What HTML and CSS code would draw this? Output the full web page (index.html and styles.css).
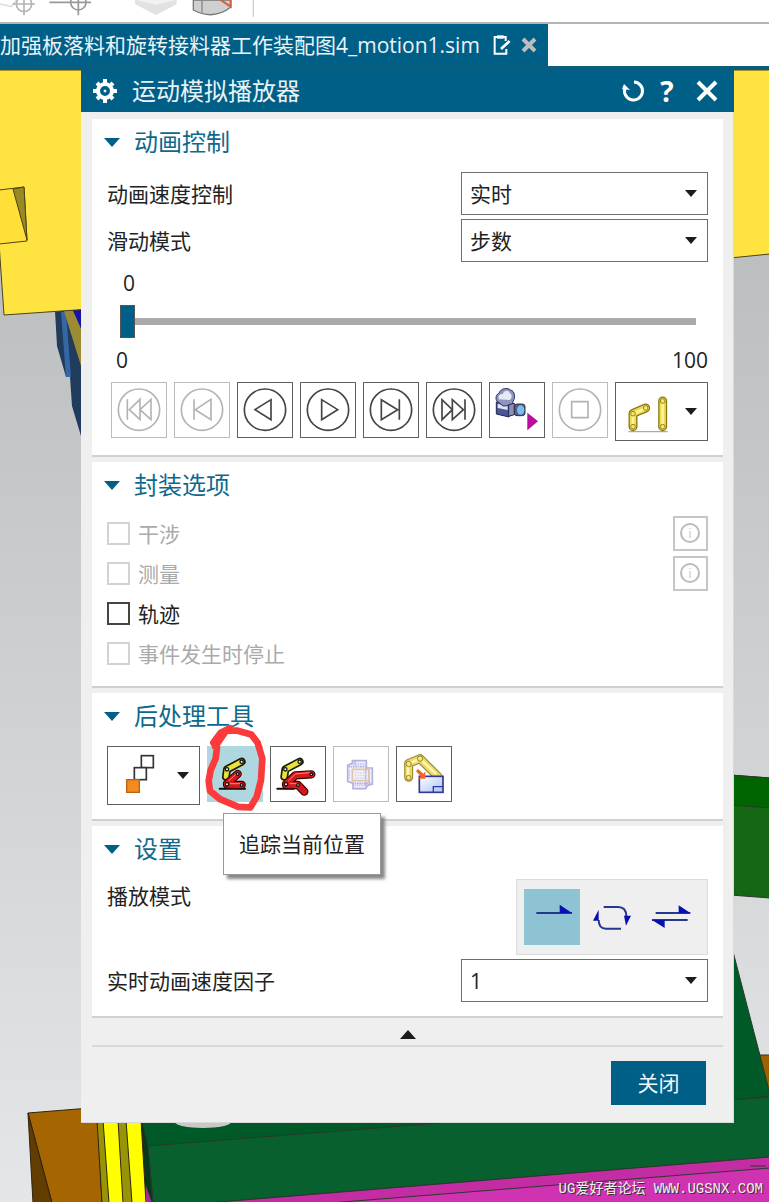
FILE: index.html
```html
<!DOCTYPE html>
<html lang="zh-CN">
<head>
    <meta charset="UTF-8">
    <meta name="viewport" content="width=device-width, initial-scale=1.0">
    <title>运动模拟播放器</title>
    <link rel="stylesheet" href="styles.css">
</head>
<body>
    <div class="toolbar">
        <svg width="260" height="22" viewBox="0 0 780 66" fill="none">
            <g stroke="#b4b4b4" stroke-width="5">
                <path d="M0 12L34 20L50 0" stroke="#ddd" />
                <circle cx="72" cy="12" r="23" />
                <path d="M38 12H105M72 0V46" />
            </g>
            <g stroke="#999" stroke-width="5">
                <circle cx="235" cy="7" r="23" />
                <path d="M148 7H273M235 0V46" />
            </g>
            <path d="M405 0H530V12L468 46L405 12Z" fill="#e2e2e2" />
            <path d="M405 0H530L468 14Z" fill="#f1f1f1" />
            <path d="M580 0H692V22Q640 62 580 30Z" fill="#cfcfcf" stroke="#777" stroke-width="4" />
            <path d="M606 0V38" stroke="#888" stroke-width="4" />
            <path d="M662 0L692 20V0" stroke="#d2603a" stroke-width="6" />
            <path d="M760 0V50" stroke="#ccc" stroke-width="4" />
        </svg>
    </div>
    <div class="tab-bar">
        <div class="tab">
            <span>加强板落料和旋转接料器工作装配图4_motion1.sim</span>
            <svg width="18" height="20" viewBox="0 0 54 60" fill="none" stroke="#fff" stroke-width="6">
                <path d="M40 42V56H5V6H38V18" />
                <path d="M12 6H32" stroke-width="10" />
                <path d="M24 42L50 18" stroke-width="8" />
            </svg>
            <button class="tab-close" aria-label="关闭标签">
                <svg width="16" height="16" viewBox="0 0 16 16" stroke="#bdbdbd" stroke-width="4">
                    <path d="M2 2L14 14M14 2L2 14" />
                </svg>
            </button>
        </div>
    </div>

    <div class="viewport">
        <!-- 3D model -->
        <svg class="scene" viewBox="0 70 769 1132" preserveAspectRatio="xMidYMin slice">
            <defs>
                <linearGradient id="sky" x1="0" y1="0" x2="0" y2="1">
                    <stop offset="0" stop-color="#b6b7b9" />
                    <stop offset="0.3" stop-color="#c3c4c6" />
                    <stop offset="1" stop-color="#e4e6e8" />
                </linearGradient>
            </defs>
            <rect x="0" y="70" width="769" height="1132" fill="url(#sky)" />
            <path d="M55 311L81 308V436L72 406L70 377H66L57 346Z" fill="#203c5c" />
            <path d="M61 312H66L71 377H66Z" fill="#3567a4" />
            <path d="M64 311H73L90 345V395Z" fill="#9a8c34" />
            <path d="M73 310H90V350Z" fill="#1a12a8" />
            <g stroke="#4c4419" stroke-width="1">
                <path d="M-1 70H90V309L4 315L-1 243Z" fill="#ffe341" />
                <path d="M-1 190L24 187L27 241L-1 244Z" fill="#ffdf38" />
                <path d="M13 189L24 187L27 240Z" fill="#998824" />
                <path d="M730 70H770V254L730 258Z" fill="#ffe341" />
            </g>
            <g stroke="#2a3a2a" stroke-width="1">
                <path d="M730 775L770 778V898L730 895Z" fill="#146814" />
                <path d="M730 775L770 778V808L730 805Z" fill="#006400" />
                <path d="M759 1055H770V1095Z" fill="#a06200" />
                <path d="M730 940L770 1094V1160L207 1203H150L142 1120H730Z" fill="#005a28" />
                <path d="M148 1146L770 1097V1157L207 1203H153Z" fill="#08602f" />
                <path d="M142 1120L148 1146L153 1203H146L141 1120Z" fill="#04391c" />
                <path d="M207 1203L770 1157V1203Z" fill="#c42ca4" />
                <path d="M330 1203L770 1168V1203Z" fill="#d033b2" />
                <path d="M750 1166H766M745 1099L769 1096" />
            </g>
            <ellipse cx="203" cy="1122" rx="28" ry="6" fill="#c8c8c8" />
            <g stroke="#2f2410" stroke-width="1">
                <path d="M28 1113L90 1108L98 1120L102 1203H52Z" fill="#a56500" />
                <path d="M28 1113L52 1203H33Z" fill="#633d00" />
                <path d="M97 1120H141L146 1203H102Z" fill="#989408" />
                <path d="M103 1120H118L123 1203H109Z" fill="#ff0" />
                <path d="M126 1120H141L146 1203H132Z" fill="#ff0" />
            </g>
            <path d="M146 1186L152 1203H146Z" fill="#a32d92" />
        </svg>

        <div class="dialog">
            <div class="dialog-header">
                <svg width="24" height="24" viewBox="0 0 24 24" fill="none" stroke="#fff">
                    <circle cx="12" cy="12" r="7" stroke-width="4" />
                    <path d="M12 0V4M12 20V24M0 12H4M20 12H24M4 4L6 6M18 18L20 20M4 20L6 18M18 6L20 4" stroke-width="4" />
                    <circle cx="12" cy="12" r="1" fill="#fff" />
                </svg>
                <h1>运动模拟播放器</h1>
                <button class="header-button" aria-label="重置">
                    <svg width="24" height="24" viewBox="0 0 24 24" fill="none" stroke="#fff" stroke-width="3">
                        <path d="M13 3A9 9 0 1 1 4 9" />
                        <path d="M1 10L3 5L9 11Z" fill="#fff" stroke="none" />
                    </svg>
                </button>
                <button class="header-button">?</button>
                <button class="header-button header-close" aria-label="关闭窗口">
                    <svg width="22" height="22" viewBox="0 0 22 22" stroke="#fff" stroke-width="4">
                        <path d="M2 2L20 20M20 2L2 20" />
                    </svg>
                </button>
            </div>

            <div class="sections">
                <section class="section">
                    <h2>动画控制</h2>
                    <div class="section-body">
                        <div class="field">
                            <label for="speedControl">动画速度控制</label>
                            <div class="select-box">
                                <select id="speedControl"><option>实时</option></select>
                            </div>
                        </div>
                        <div class="field">
                            <label for="slideMode">滑动模式</label>
                            <div class="select-box">
                                <select id="slideMode"><option>步数</option></select>
                            </div>
                        </div>
                        <label class="slider-value" for="stepSlider">0</label>
                        <input type="range" class="slider" id="stepSlider" min="0" max="100" value="0">
                        <div class="slider-range">
                            <span>0</span>
                            <span>100</span>
                        </div>
                        <div class="button-row playback">
                            <button class="icon-button" aria-label="第一步" disabled>
                                <svg viewBox="3 3 162 162"><circle cx="84" cy="83" r="62" /><path d="M49 52V113M87 52V113L55 83ZM120 52V113L87 83Z" /></svg>
                            </button>
                            <button class="icon-button" aria-label="上一步" disabled>
                                <svg viewBox="3 3 162 162"><circle cx="84" cy="83" r="62" /><path d="M60 52V113M111 52V113L64 83Z" /></svg>
                            </button>
                            <button class="icon-button" aria-label="向后播放">
                                <svg viewBox="3 3 162 162"><circle cx="84" cy="83" r="62" /><path d="M102 53V113L54 83Z" /></svg>
                            </button>
                            <button class="icon-button" aria-label="播放">
                                <svg viewBox="3 3 162 162"><circle cx="84" cy="83" r="62" /><path d="M65 53V113L113 83Z" /></svg>
                            </button>
                            <button class="icon-button" aria-label="下一步">
                                <svg viewBox="3 3 162 162"><circle cx="84" cy="83" r="62" /><path d="M109 52V113M55 53V113L104 83Z" /></svg>
                            </button>
                            <button class="icon-button" aria-label="最后一步">
                                <svg viewBox="3 3 162 162"><circle cx="84" cy="83" r="62" /><path d="M117 52V113M48 53V113L79 83ZM79 53V113L112 83Z" /></svg>
                            </button>
                            <button class="icon-button" aria-label="导出电影">
                                <svg class="picture" viewBox="3 3 162 162">
                                    <path d="M22 60L60 66V105L22 96Z" fill="#4a5596" stroke="#20264e" stroke-width="3" />
                                    <path d="M26 66L56 70V84L26 78Z" fill="#dfe4f8" />
                                    <path d="M30 62C18 58 18 38 30 34C34 18 58 16 64 24C78 26 80 48 72 58L70 70L42 72Z" fill="#8d94bf" stroke="#2d3158" stroke-width="3" />
                                    <path d="M30 52C26 42 32 34 42 36C44 24 60 24 62 33C70 36 70 48 62 54Z" fill="#e6e8f6" />
                                    <path d="M59 68L76 64V98L59 103Z" fill="#8890bb" stroke="#20264e" stroke-width="3" />
                                    <rect x="76" y="66" width="32" height="35" rx="8" fill="#555f86" stroke="#333" stroke-width="3" />
                                    <ellipse cx="95" cy="84" rx="11" ry="14" fill="#79bdf2" />
                                    <path d="M115 92L147 118L115 145Z" fill="#bb0c9a" />
                                </svg>
                            </button>
                            <button class="icon-button" aria-label="停止" disabled>
                                <svg viewBox="3 3 162 162"><circle cx="84" cy="83" r="62" /><path d="M59 59H108V107H59Z" /></svg>
                            </button>
                            <button class="icon-button combo" aria-label="设计位置">
                                <svg class="picture" viewBox="3 3 168 171">
                                    <path d="M40 149H158" stroke="#aaa" stroke-width="4" />
                                    <g fill="none" stroke-linecap="round" stroke-linejoin="round">
                                        <path d="M54 134V94L92 78M143 57V134" stroke="#8a7a16" stroke-width="27" />
                                        <path d="M54 134V94L92 78M143 57V134" stroke="#f0dc50" stroke-width="19" />
                                        <path d="M54 130V96L90 80M143 65V128" stroke="#fdf6a8" stroke-width="7" />
                                    </g>
                                    <g fill="#f4e470" stroke="#9a871c" stroke-width="3">
                                        <circle cx="54" cy="134" r="7" /><circle cx="54" cy="95" r="7" /><circle cx="92" cy="78" r="7" />
                                        <circle cx="143" cy="57" r="7" /><circle cx="143" cy="134" r="7" />
                                    </g>
                                </svg>
                                <span class="caret"></span>
                            </button>
                        </div>
                    </div>
                </section>

                <section class="section">
                    <h2>封装选项</h2>
                    <div class="section-body options">
                        <div class="option">
                            <input type="checkbox" id="interference" disabled>
                            <label for="interference">干涉</label>
                            <button class="info-button" aria-label="干涉信息" disabled>
                                <svg width="21" height="21" viewBox="0 0 21 21" fill="none" stroke="#bbb"><circle cx="10" cy="10" r="9" stroke-width="2" /><path d="M10 5V6M10 8V15" /></svg>
                            </button>
                        </div>
                        <div class="option">
                            <input type="checkbox" id="measure" disabled>
                            <label for="measure">测量</label>
                            <button class="info-button" aria-label="测量信息" disabled>
                                <svg width="21" height="21" viewBox="0 0 21 21" fill="none" stroke="#bbb"><circle cx="10" cy="10" r="9" stroke-width="2" /><path d="M10 5V6M10 8V15" /></svg>
                            </button>
                        </div>
                        <div class="option">
                            <input type="checkbox" id="trace">
                            <label for="trace">轨迹</label>
                        </div>
                        <div class="option">
                            <input type="checkbox" id="stopOnEvent" disabled>
                            <label for="stopOnEvent">事件发生时停止</label>
                        </div>
                    </div>
                </section>

                <section class="section">
                    <h2>后处理工具</h2>
                    <div class="section-body">
                        <div class="button-row">
                            <button class="icon-button combo" aria-label="运动序列">
                                <svg class="picture" viewBox="3 3 168 171">
                                    <g fill="#fff" stroke="#333" stroke-width="5">
                                        <rect x="103" y="29" width="36" height="36" />
                                        <rect x="82" y="65" width="36" height="36" />
                                    </g>
                                    <rect x="59" y="101" width="38" height="38" fill="#f58a1f" stroke="#b86412" stroke-width="4" />
                                </svg>
                                <span class="caret"></span>
                            </button>
                            <div class="tool">
                                <button class="icon-button selected" aria-describedby="traceTip" aria-label="追踪">
                                    <svg class="picture" viewBox="3 3 162 162">
                                        <g fill="none" stroke-linecap="round" stroke-linejoin="round">
                                            <path d="M38 128H114" stroke="#111" stroke-width="6" />
                                            <path d="M57 92L60 70L104 47" stroke="#1a1a00" stroke-width="24" />
                                            <path d="M57 92L60 70L104 47" stroke="#e8e23c" stroke-width="14" />
                                            <path d="M60 113L92 84M60 116L104 117" stroke="#3a0000" stroke-width="25" />
                                            <path d="M60 113L92 84M60 116L104 117" stroke="#d4181c" stroke-width="18" />
                                            <path d="M66 104L88 84M70 113H98" stroke="#ff8c80" stroke-width="3" />
                                        </g>
                                        <g fill="#fff" stroke="#111" stroke-width="4">
                                            <circle cx="60" cy="70" r="5" /><circle cx="104" cy="47" r="5" />
                                            <circle cx="92" cy="84" r="4" /><circle cx="60" cy="115" r="5" /><circle cx="104" cy="117" r="4" />
                                        </g>
                                    </svg>
                                </button>
                                <svg class="marker" width="70" height="97" viewBox="330 90 210 290" fill="none" stroke="#fb3a3c" stroke-width="20" stroke-linecap="round" stroke-linejoin="round">
                                    <path d="M420 114L392 128L370 158L381 172L377 205L362 240L356 272L360 302L390 327L445 350L481 352L500 320L513 270L517 205L503 158L484 133L440 121L408 122L390 148L376 170" />
                                </svg>
                                <div class="tooltip" id="traceTip" role="tooltip">追踪当前位置</div>
                            </div>
                            <button class="icon-button" aria-label="追踪整个机构">
                                <svg class="picture" viewBox="3 3 162 162">
                                    <g fill="none" stroke-linecap="round" stroke-linejoin="round">
                                        <path d="M22 128H72" stroke="#111" stroke-width="6" />
                                        <path d="M43 92L46 70L89 47" stroke="#1a1a00" stroke-width="24" />
                                        <path d="M43 92L46 70L89 47" stroke="#e8e23c" stroke-width="14" />
                                        <path d="M48 114L76 88L124 85M48 117L84 117L103 137" stroke="#3a0000" stroke-width="25" />
                                        <path d="M48 114L76 88L124 85M48 117L84 117L103 137" stroke="#d4181c" stroke-width="18" />
                                        <path d="M56 104L76 84L118 80M60 113H82" stroke="#ff8c80" stroke-width="3" />
                                    </g>
                                    <g fill="#fff" stroke="#111" stroke-width="4">
                                        <circle cx="46" cy="70" r="5" /><circle cx="89" cy="47" r="5" />
                                        <circle cx="48" cy="115" r="5" /><circle cx="124" cy="85" r="4" /><circle cx="84" cy="117" r="4" />
                                    </g>
                                </svg>
                            </button>
                            <button class="icon-button" aria-label="干涉体" disabled>
                                <svg class="picture" viewBox="3 3 162 162" fill="none">
                                    <g stroke="#b3b1dc" stroke-width="5">
                                        <path d="M58 44H100V66H118V114L104 118L98 128H60V112L44 106V58L58 52Z" fill="#f1f0fa" />
                                        <path d="M46 62H98V124M66 46V60M58 112H112M108 70V110" stroke-dasharray="5 2" />
                                    </g>
                                    <path d="M60 54H98M48 72V100M64 118H96" stroke="#c9c7e8" stroke-width="6" stroke-dasharray="4 3" />
                                    <path d="M58 70H108V104H58Z" stroke="#e2c3ae" stroke-width="5" />
                                    <path d="M66 80H102M66 88H102M66 96H102" stroke="#d5d0e4" stroke-width="4" stroke-dasharray="4 4" />
                                </svg>
                            </button>
                            <button class="icon-button" aria-label="创建布局">
                                <svg class="picture" viewBox="3 3 162 162">
                                    <defs>
                                        <linearGradient id="sheet" x1="0" y1="0" x2="1" y2="1">
                                            <stop offset="0" stop-color="#fff" />
                                            <stop offset="1" stop-color="#a9c4f5" />
                                        </linearGradient>
                                    </defs>
                                    <g fill="none" stroke-linecap="round" stroke-linejoin="round">
                                        <path d="M38 94V52L72 38L126 92" stroke="#9a8b30" stroke-width="27" />
                                        <path d="M38 94V52L72 38L126 92" stroke="#ecd964" stroke-width="20" />
                                        <path d="M36 90V54L72 38L118 82" stroke="#fdf5b4" stroke-width="8" />
                                    </g>
                                    <g fill="#f4e68a" stroke="#9a871c" stroke-width="3">
                                        <circle cx="38" cy="54" r="8" /><circle cx="72" cy="38" r="8" /><circle cx="38" cy="95" r="7" />
                                    </g>
                                    <rect x="70" y="91" width="71" height="48" fill="url(#sheet)" stroke="#3038a0" stroke-width="5" />
                                    <path d="M112 139V122H141" fill="none" stroke="#3038a0" stroke-width="4" />
                                    <path d="M60 76L66 69L82 83L88 76V98H66L74 91Z" fill="#f0662c" />
                                </svg>
                            </button>
                        </div>
                    </div>
                </section>

                <section class="section">
                    <h2>设置</h2>
                    <div class="section-body">
                        <div class="field mode-field">
                            <span id="modeLabel">播放模式</span>
                            <div class="mode-group" role="group" aria-labelledby="modeLabel">
                                <button class="mode-button active" aria-label="播放一次">
                                    <svg viewBox="0 0 168 168"><path d="M37 72H144" /><path class="head" d="M107 47L144 72H107Z" /></svg>
                                </button>
                                <button class="mode-button" aria-label="循环播放">
                                    <svg viewBox="0 0 168 168"><path d="M59 54H102Q127 54 127 82M111 119H66Q44 119 44 93" /><path class="head" d="M120 80H141L126 110ZM27 95L44 62V95Z" /></svg>
                                </button>
                                <button class="mode-button" aria-label="往返播放">
                                    <svg viewBox="0 0 168 168"><path d="M35 72H139M24 93H131" /><path class="head" d="M104 49L139 72H104ZM24 93H62V117Z" /></svg>
                                </button>
                            </div>
                        </div>
                        <div class="field">
                            <label for="speedFactor">实时动画速度因子</label>
                            <div class="select-box">
                                <select id="speedFactor"><option>1</option></select>
                            </div>
                        </div>
                    </div>
                </section>

                <button class="collapse" aria-label="收起"><span class="caret up"></span></button>
            </div>

            <div class="dialog-footer">
                <button class="close-button">关闭</button>
            </div>
        </div>

        <div class="watermark">UG爱好者论坛 WWW.UGSNX.COM</div>
    </div>
</body>
</html>
```
FILE: styles.css
```css
* {
    box-sizing: border-box;
    margin: 0;
    padding: 0;
}
body {
    display: flex;
    flex-direction: column;
    min-height: 100vh;
    background-color: #fff;
    color: #222;
    font-family: "Open Sans", "Noto Sans CJK SC", sans-serif;
    font-size: 21px;
    line-height: 34px;
}
button, select {
    font: inherit;
    color: inherit;
}
button {
    border: none;
    background-color: transparent;
}
svg {
    display: block;
}

/* top bars */
.toolbar {
    height: 24px;
    border-bottom: 2px solid #b4b4b4;
    overflow: hidden;
}
.tab-bar {
    display: flex;
    border-bottom: 4px solid #0b5c7d;
}
.tab {
    display: flex;
    align-items: center;
    height: 42px;
    padding-right: 11px;
    background-color: #005f87;
    color: #e9f3f7;
    white-space: nowrap;
}
.tab > svg {
    margin: 0 10px 0 13px;
}

/* graphics window */
.viewport {
    position: relative;
    flex: 1;
    padding: 0 35px 78px 81px;
}
.scene {
    position: absolute;
    top: 0;
    left: 0;
    width: 100%;
    height: 100%;
}
.watermark {
    position: absolute;
    right: 6px;
    bottom: 3px;
    color: #eee;
    font-family: "Liberation Mono", "Noto Sans CJK SC", monospace;
    font-size: 14px;
    line-height: 20px;
    text-shadow: 1px 1px 0 #333;
}

/* dialog */
.dialog {
    position: relative;
    background-color: #efefef;
    box-shadow: inset -1px -1px 0 #d9d9d9;
}
.dialog-header {
    display: flex;
    align-items: center;
    height: 42px;
    padding: 0 4px 0 12px;
    background-color: #005f87;
    color: #fff;
}
.dialog-header h1 {
    flex: 1;
    margin-left: 15px;
    font-size: 24px;
    font-weight: 400;
    color: #e9f3f7;
}
.header-button {
    display: flex;
    justify-content: center;
    align-items: center;
    width: 34px;
    height: 42px;
    font-size: 28px;
    font-weight: 700;
}
.header-close {
    width: 46px;
}
.sections {
    display: flex;
    flex-direction: column;
    gap: 5px;
    padding: 7px 11px 0;
}
.section {
    background-color: #fff;
    border-bottom: 2px solid #d0d0d0;
}
.section h2 {
    display: flex;
    align-items: center;
    gap: 14px;
    height: 46px;
    padding-left: 12px;
    font-size: 24px;
    font-weight: 400;
    color: #0d6a8c;
}
.section h2::before {
    content: "";
    border: 8px solid transparent;
    border-top: 9px solid #005f87;
    border-bottom: none;
}
.section-body {
    padding: 7px 15px 14px;
}

/* fields */
.field {
    display: flex;
    justify-content: space-between;
    align-items: center;
}
.field + .field {
    margin-top: 4px;
}
.mode-field {
    align-items: flex-start;
}
.select-box {
    display: grid;
    align-items: center;
    width: 247px;
}
.select-box select {
    grid-area: 1 / 1;
    height: 43px;
    padding: 0 8px;
    border: 1px solid #6e6e6e;
    border-radius: 0;
    background-color: #fff;
    appearance: none;
}
.select-box::after {
    content: "";
    grid-area: 1 / 1;
    justify-self: end;
    margin-right: 11px;
    border: 6px solid transparent;
    border-top: 7px solid #1c1c1c;
    border-bottom: none;
    pointer-events: none;
}
.caret {
    border: 6px solid transparent;
    border-top: 7px solid #1c1c1c;
    border-bottom: none;
}
.caret.up {
    border: 8px solid transparent;
    border-top: none;
    border-bottom: 9px solid #1c1c1c;
}

/* slider */
.slider-value {
    display: block;
    padding-left: 16px;
    line-height: 42px;
}
.slider {
    display: block;
    width: calc(100% - 25px);
    height: 34px;
    margin: 0 12px 0 13px;
    background-color: transparent;
    appearance: none;
}
.slider::-webkit-slider-runnable-track {
    height: 7px;
    background-color: #aaa;
}
.slider::-webkit-slider-thumb {
    width: 15px;
    height: 33px;
    margin-top: -13px;
    border: 1px solid #555;
    background-color: #005f87;
    appearance: none;
}
.slider-range {
    display: flex;
    justify-content: space-between;
    padding-left: 9px;
    line-height: 44px;
}

/* icon buttons */
.button-row {
    display: flex;
    align-items: flex-start;
    gap: 7px;
}
.playback {
    justify-content: flex-end;
}
.icon-button {
    width: 56px;
    height: 56px;
    border: 1px solid #5f5f5f;
    background-color: #fff;
}
.icon-button svg {
    width: 54px;
    height: 54px;
    fill: none;
    stroke: #444;
    stroke-width: 5px;
}
.icon-button svg.picture {
    stroke: none;
    stroke-width: 1px;
}
.icon-button:disabled {
    border-color: #bbb;
}
.icon-button:disabled svg:not(.picture) {
    stroke: #b4b4b4;
}
.icon-button.selected {
    border-color: #afd7e0;
    background-color: #afd7e0;
}
.icon-button.combo {
    display: flex;
    justify-content: space-between;
    align-items: center;
    width: 93px;
    height: 59px;
    padding-right: 10px;
}
.icon-button.combo svg {
    width: 56px;
    height: 57px;
}

/* package options */
.options {
    display: flex;
    flex-direction: column;
    gap: 5px;
    padding: 8px 15px 15px;
}
.option {
    display: flex;
    align-items: center;
    gap: 8px;
    height: 35px;
}
.option input {
    width: 23px;
    height: 23px;
    border: 2px solid #444;
    background-color: #fff;
    appearance: none;
}
.option input:disabled {
    border-color: #d2d2d2;
}
.option input:disabled + label {
    color: #aaa;
}
.info-button {
    display: flex;
    justify-content: center;
    align-items: center;
    width: 35px;
    height: 35px;
    margin-left: auto;
    border: 2px solid #c6c6c6;
}

/* highlighted tool */
.tool {
    display: flex;
    position: relative;
}
.marker {
    position: absolute;
    left: -7px;
    top: -26px;
    z-index: 1;
    pointer-events: none;
}
.tooltip {
    position: absolute;
    left: 16px;
    top: 67px;
    z-index: 2;
    padding: 13px 15px;
    border: 1px solid #999;
    background-color: #fff;
    box-shadow: 4px 4px 3px #888;
    white-space: nowrap;
}

/* play mode */
.mode-group {
    display: flex;
    gap: 4px;
    padding: 9px 7px;
    border: 1px solid #dcdcdc;
    background-color: #efefef;
}
.mode-button {
    width: 56px;
    height: 56px;
}
.mode-button.active {
    background-color: #8dc3d2;
}
.mode-button svg {
    fill: none;
    stroke: #24398c;
    stroke-width: 6px;
}
.mode-button .head {
    fill: #0a0fb4;
    stroke: none;
}

/* footer */
.collapse {
    display: flex;
    justify-content: center;
    align-items: center;
    height: 24px;
    border-bottom: 2px solid #d9d9d9;
}
.dialog-footer {
    display: flex;
    justify-content: flex-end;
    padding: 14px 28px 18px;
}
.close-button {
    width: 95px;
    height: 44px;
    background-color: #005f87;
    color: #f1f7fa;
}
button:hover {
    cursor: pointer;
}
```
